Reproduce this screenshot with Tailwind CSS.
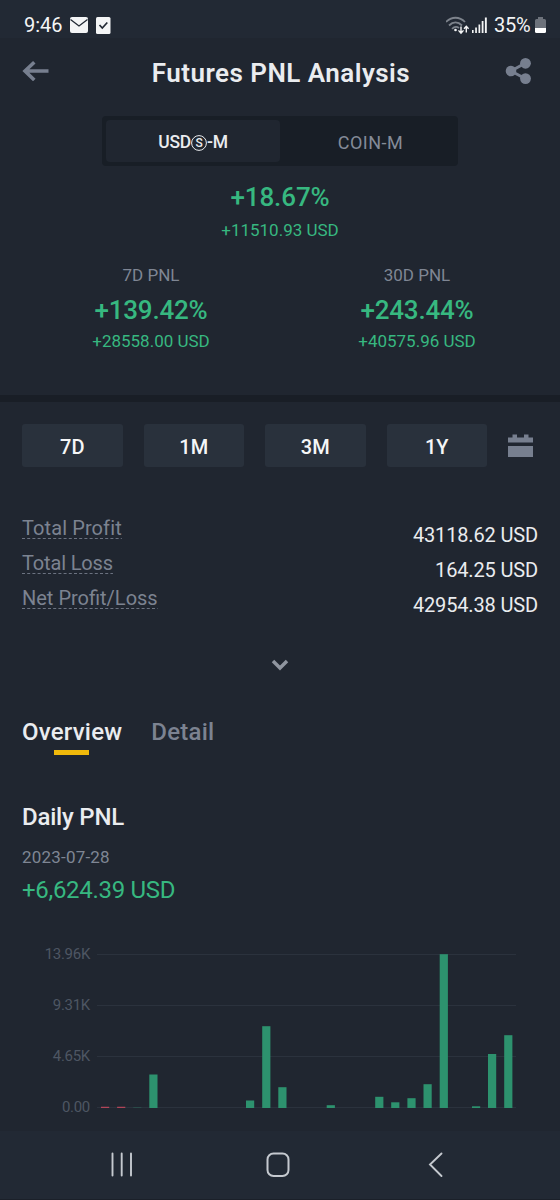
<!DOCTYPE html>
<html lang="en">
<head>
<meta charset="utf-8">
<title>Futures PNL Analysis</title>
<script src="https://cdn.jsdelivr.net/npm/@tailwindcss/browser@4"></script>
</head>
<body class="bg-[#202630]">
<div class="flex h-[1200px] w-[560px] flex-col overflow-hidden bg-[#202630] font-['Roboto',sans-serif] text-[#eaecef]">

  <!-- Status bar -->
  <div class="flex h-[38px] shrink-0 items-start justify-between bg-[#222934] pl-6 pr-[14px] pt-[15px]">
    <div class="flex items-start">
      <span class="w-[46px] whitespace-nowrap text-[20px] leading-5 text-[#f4f5f6]">9:46</span>
      <svg class="mt-[2px] h-4 w-[18px]" viewBox="0 0 18 16"><rect width="18" height="16" rx="2" fill="#f4f5f6"/><path d="M0.500 2.500 9 9l8.500-6.500" fill="none" stroke="#222934" stroke-width="1.300"/></svg>
      <svg class="ml-2 mt-[2px] h-[17px] w-[15px]" viewBox="0 0 15 17"><rect width="14.500" height="17" rx="1.500" fill="#f4f5f6"/><path d="m3.500 8 2.800 3 5-5.500" fill="none" stroke="#222934" stroke-width="1.700"/></svg>
    </div>
    <div class="flex items-start">
      <svg class="mt-[1px] h-[19px] w-6" viewBox="0 0 24 19" fill="none"><path d="M0 6C5.500 0.300 13.500 0.300 19 6M3 9.500c4-4 9-4 13 0M6 12.800c2.300-2.200 5-2.200 7 -0.800" stroke="#7d838c" stroke-width="1.800"/><circle cx="9.500" cy="14" r="1.300" fill="#f4f5f6"/><path d="M15 10.500v6.500m-2.500-2.600 2.500 2.800 2.500-2.800M20.300 16.500v-6m-2.300 2.300 2.300-2.500 2.300 2.500" stroke="#f4f5f6" stroke-width="1.400"/></svg>
      <svg class="ml-[2px] mr-px mt-[2px] h-4 w-[15px]" viewBox="0 0 15 16" fill="#f4f5f6"><path d="M0 13h1.600v3H0zM3.200 10.500h1.700V16H3.200zM6.500 7.500h1.700V16H6.500zM9.700 4h1.800v12H9.700zM12.900 0.500h1.900V16h-1.900z"/></svg>
      <span class="ml-[6px] w-[41px] whitespace-nowrap text-[20px] leading-5 tracking-[-0.3px] text-[#f4f5f6]">35%</span>
      <svg class="mt-[2px] h-4 w-[11px]" viewBox="0 0 11 16"><path d="M3 0h5v2h1.500A1.500 1.500 0 0 1 11 3.500V11H0V3.500A1.500 1.500 0 0 1 1.500 2H3z" fill="#6d727b"/><path d="M0 11h11v3.500a1.500 1.500 0 0 1-1.500 1.500h-8A1.500 1.500 0 0 1 0 14.500z" fill="#fff"/></svg>
    </div>
  </div>

  <!-- Header -->
  <header class="flex h-[78px] shrink-0 items-start justify-between px-[22px] pt-[18px]">
    <svg class="mt-[5px] h-5 w-7" viewBox="0 0 28 20" fill="none" stroke="#777f8f" stroke-width="3.600"><path d="M26.500 10H3M12.300 1.300 3 10l9.300 9"/></svg>
    <h1 class="ml-[8px] whitespace-nowrap text-[26px] font-semibold leading-[34px] tracking-[0.47px]">Futures PNL Analysis</h1>
    <svg class="mr-[6px] h-[28px] w-[28px]" viewBox="0 0 28 28"><path d="M21.500 7 7 15l14.500 7.700" fill="none" stroke="#777f8f" stroke-width="3"/><g fill="#777f8f"><circle cx="21.500" cy="7.300" r="5.400"/><circle cx="7" cy="15" r="5.300"/><circle cx="21.500" cy="22.600" r="5.400"/></g></svg>
  </header>

  <!-- Market switch -->
  <div class="ml-[102px] flex h-[50px] w-[356px] shrink-0 rounded-[4px] bg-[#181e26] p-1 text-[18px]">
    <div class="flex w-[174px] items-center justify-center rounded-[4px] bg-[#202630] pt-[3px] text-[17.500px] font-medium tracking-[-0.2px]">USD<svg class="h-4 w-4" viewBox="0 0 16 16"><circle cx="8" cy="8" r="7.400" fill="none" stroke="currentColor"/><text x="8" y="12.200" text-anchor="middle" font-size="12" fill="currentColor">S</text></svg>-M</div>
    <div class="flex flex-1 items-center justify-center pl-[7px] pt-[3px] tracking-[0.5px] text-[#848b98]">COIN-M</div>
  </div>

  <!-- PNL summary -->
  <section class="flex h-[229px] shrink-0 flex-col text-center text-[#37b880]">
    <div class="mt-4 text-[26px] font-medium leading-[30px] tracking-[-0.1px]">+18.67%</div>
    <div class="mt-[8px] text-[17px] leading-5">+11510.93 USD</div>
    <div class="mt-[25px] grid grid-cols-2 pl-[18px] pr-[10px]">
      <div>
        <div class="text-[17px] leading-5 text-[#7f8694]">7D PNL</div>
        <div class="mt-[10px] text-[26px] font-medium leading-[30px] tracking-[-0.2px]">+139.42%</div>
        <div class="mt-[6px] text-[17px] leading-5">+28558.00 USD</div>
      </div>
      <div>
        <div class="text-[17px] leading-5 text-[#7f8694]">30D PNL</div>
        <div class="mt-[10px] text-[26px] font-medium leading-[30px] tracking-[-0.2px]">+243.44%</div>
        <div class="mt-[6px] text-[17px] leading-5">+40575.96 USD</div>
      </div>
    </div>
  </section>
  <div class="h-[7px] shrink-0 bg-[#191e26]"></div>

  <!-- Range picker -->
  <div class="ml-[22px] mt-[22px] flex h-[43px] shrink-0 items-center text-[20px] font-medium text-[#f5f6f7]">
    <button class="mr-[21px] h-full w-[100.500px] rounded-[3px] bg-[#29313c] pt-[2px]">7D</button>
    <button class="mr-[21px] h-full w-[100.500px] rounded-[3px] bg-[#29313c] pt-[2px]">1M</button>
    <button class="mr-[21px] h-full w-[100.500px] rounded-[3px] bg-[#29313c] pt-[2px]">3M</button>
    <button class="mr-[21px] h-full w-[100.500px] rounded-[3px] bg-[#29313c] pt-[2px]">1Y</button>
    <svg class="h-[23px] w-[25px]" viewBox="0 0 25 23" fill="#777f8f"><path d="M0 3.500h4.500V0.500h4.500v3h7V0.500h4.500v3H25V8.500H0zM0 12h25v11H0z"/></svg>
  </div>

  <!-- Totals -->
  <div class="mt-[46px] flex h-[141px] shrink-0 justify-between px-[22px] text-[20px]">
    <div class="flex flex-col items-start gap-[9px] text-[#7c8391]">
      <div class="grid"><div class="h-[25px] whitespace-nowrap leading-[30px] tracking-[0.1px]">Total Profit</div><svg class="h-px w-0 min-w-full"><line x2="100%" y1="0.500" y2="0.500" stroke="#6b7280" stroke-dasharray="3 2.200"/></svg></div>
      <div class="grid"><div class="h-[25px] whitespace-nowrap leading-[30px] tracking-[-0.15px]">Total Loss</div><svg class="h-px w-0 min-w-full"><line x2="100%" y1="0.500" y2="0.500" stroke="#6b7280" stroke-dasharray="3 2.200"/></svg></div>
      <div class="grid"><div class="h-[25px] whitespace-nowrap leading-[30px]">Net Profit/Loss</div><svg class="h-px w-0 min-w-full"><line x2="100%" y1="0.500" y2="0.500" stroke="#6b7280" stroke-dasharray="3 2.200"/></svg></div>
    </div>
    <div class="pt-[5px] text-right leading-[35.200px] tracking-[-0.15px]">
      <div>43118.62 USD</div>
      <div>164.25 USD</div>
      <div>42954.38 USD</div>
    </div>
  </div>
  <svg class="ml-[271px] mt-[5px] h-3 w-[18px] shrink-0" viewBox="0 0 18 12" fill="none" stroke="#8f959f" stroke-width="3.500"><path d="m2 2 7 7 7-7"/></svg>

  <!-- Tabs -->
  <nav class="mt-[47px] flex h-[38px] shrink-0 gap-[29px] pl-[22px] text-[24px] font-medium leading-7 tracking-[0.22px]">
    <div class="flex flex-col items-center"><span>Overview</span><span class="mr-px mt-[4px] h-[5px] w-[35px] bg-[#f0b90b]"></span></div>
    <div class="text-[#7c8391]">Detail</div>
  </nav>

  <!-- Daily PNL -->
  <section class="mt-[47px] shrink-0 px-[22px]">
    <h2 class="text-[24px] font-medium leading-7 tracking-[-0.2px]">Daily PNL</h2>
    <div class="mt-[16px] text-[17px] leading-5 tracking-[0.2px] text-[#7f8694]">2023-07-28</div>
    <div class="mt-[9px] text-[24px] leading-7 tracking-[-0.3px] text-[#37b880]">+6,624.39 USD</div>
  </section>

  <!-- Bar chart -->
  <section class="mt-[40px] flex h-[187px] shrink-0">
    <div class="flex h-[173px] w-[90px] flex-col justify-between text-right text-[15px] leading-5 tracking-[-0.3px] text-[#4e5663]">
      <span>13.96K</span><span>9.31K</span><span>4.65K</span><span>0.00</span>
    </div>
    <div class="ml-[7px] mt-[10px] grid h-[154px] w-[419px]">
      <div class="col-start-1 row-start-1 flex flex-col justify-between">
        <i class="h-px bg-[#2b323d]"></i><i class="h-px bg-[#2b323d]"></i><i class="h-px bg-[#2b323d]"></i><i class="h-px bg-[#2b323d]"></i>
      </div>
      <svg class="col-start-1 row-start-1 h-[154px] w-[419px]" viewBox="0 0 419 154" fill="#2d926e">
        <path fill="#b04558" d="M4 152.800h8.200v1.200H4zM20.100 152.800h8.200v1.200h-8.200z"/>
        <path fill="#2a4a49" d="M36.200 153h8.200v1h-8.200z"/>
        <rect x="52.300" y="120.500" width="8.200" height="33.500"/>
        <rect x="149" y="146.500" width="8.200" height="7.500"/>
        <rect x="165.200" y="72.200" width="8.200" height="81.800"/>
        <rect x="181.300" y="133.200" width="8.200" height="20.800"/>
        <rect x="229.700" y="151.200" width="8.200" height="2.800"/>
        <rect x="278.200" y="142.800" width="8.200" height="11.200"/>
        <rect x="294.200" y="148.300" width="8.200" height="5.700"/>
        <rect x="310.400" y="144.200" width="8.200" height="9.800"/>
        <rect x="326.500" y="130.200" width="8.200" height="23.800"/>
        <rect x="342.700" y="0.200" width="8.200" height="153.800"/>
        <rect x="375" y="152.300" width="8.200" height="1.700"/>
        <rect x="391" y="100" width="8.200" height="54"/>
        <rect x="407.200" y="81.200" width="8.200" height="72.800"/>
      </svg>
    </div>
  </section>

  <!-- System navigation -->
  <div class="flex min-h-0 flex-1 items-start border-b border-[#1b2029] bg-[#222934] pl-[110px] pt-[21px]">
    <svg class="h-[25px] w-[24px]" viewBox="0 0 24 25" stroke="#c5c9cf" stroke-width="1.900" stroke-linecap="round"><path d="M2.500 1.500v22M11.700 1.500v22M21 1.500v22"/></svg>
    <svg class="ml-[132px] h-[26px] w-6" viewBox="0 0 24 26"><rect x="1.500" y="1.500" width="21" height="22.500" rx="6" fill="none" stroke="#c5c9cf" stroke-width="2"/></svg>
    <svg class="ml-[138px] h-[26px] w-4" viewBox="0 0 16 26" fill="none" stroke="#c5c9cf" stroke-width="1.900" stroke-linecap="round"><path d="M13.500 1.500 2 12.500l11.500 11.500"/></svg>
  </div>
</div>
</body>
</html>
